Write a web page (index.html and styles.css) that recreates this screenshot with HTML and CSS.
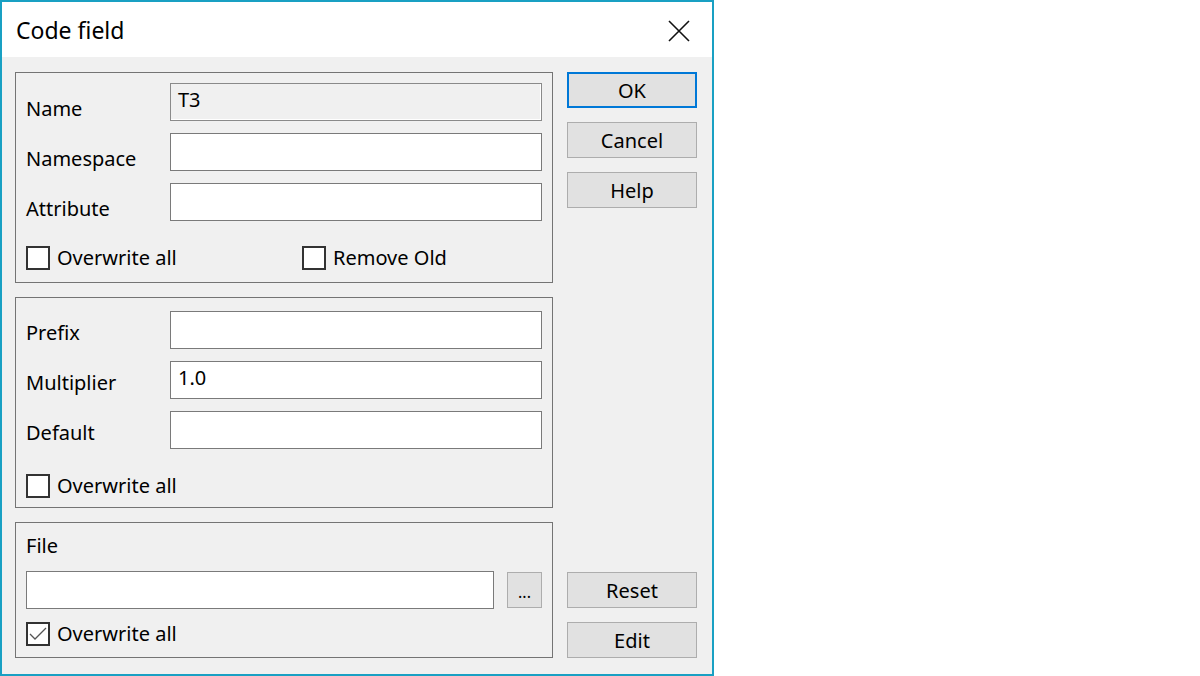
FILE: index.html
```html
<!DOCTYPE html>
<html>
<head>
    <meta charset="UTF-8">
    <title>Code field</title>
    <link rel="stylesheet" href="styles.css">
</head>
<body>
    <div class="window">
        <div class="titlebar">
            <span class="title">Code field</span>
            <span class="close">
                <svg width="22" height="22" viewBox="0 0 22 22">
                    <path d="M1 1 L21 21 M21 1 L1 21" stroke="#111" stroke-width="1.6" fill="none"/>
                </svg>
            </span>
        </div>

        <div class="content">
            <div class="groups">
                <div class="group group-code">
                    <div class="field-row">
                        <span class="label">Name</span>
                        <div class="input readonly">T3</div>
                    </div>
                    <div class="field-row">
                        <span class="label">Namespace</span>
                        <div class="input"></div>
                    </div>
                    <div class="field-row">
                        <span class="label">Attribute</span>
                        <div class="input"></div>
                    </div>
                    <div class="check-row">
                        <label class="check check-wide"><span class="box"></span>Overwrite all</label>
                        <label class="check"><span class="box"></span>Remove Old</label>
                    </div>
                </div>

                <div class="group group-value">
                    <div class="field-row">
                        <span class="label">Prefix</span>
                        <div class="input"></div>
                    </div>
                    <div class="field-row">
                        <span class="label">Multiplier</span>
                        <div class="input">1.0</div>
                    </div>
                    <div class="field-row">
                        <span class="label">Default</span>
                        <div class="input"></div>
                    </div>
                    <div class="check-row">
                        <label class="check"><span class="box"></span>Overwrite all</label>
                    </div>
                </div>

                <div class="group group-file">
                    <span class="label file-label">File</span>
                    <div class="file-row">
                        <div class="input file-input"></div>
                        <button class="btn btn-small">...</button>
                    </div>
                    <div class="check-row">
                        <label class="check"><span class="box checked">
                            <svg width="20" height="20" viewBox="0 0 20 20">
                                <path d="M2 10 L7 15 L18 4" stroke="#555" stroke-width="1.3" fill="none"/>
                            </svg>
                        </span>Overwrite all</label>
                    </div>
                </div>
            </div>

            <div class="side">
                <div class="side-top">
                    <button class="btn btn-default">OK</button>
                    <button class="btn">Cancel</button>
                    <button class="btn">Help</button>
                </div>
                <div class="side-bottom">
                    <button class="btn">Reset</button>
                    <button class="btn">Edit</button>
                </div>
            </div>
        </div>
    </div>
</body>
</html>
```

FILE: styles.css
```css
body {
    margin: 0;
    background: #fff;
    font-family: "Noto Sans", "Open Sans", sans-serif;
    color: #000;
}
.window {
    width: 714px;
    height: 676px;
    box-sizing: border-box;
    border: 2px solid #19a0c3;
    background: #f0f0f0;
    display: flex;
    flex-direction: column;
}
.titlebar {
    height: 55px;
    background: #fff;
    display: flex;
    align-items: center;
    justify-content: space-between;
    padding: 0 22px 0 14px;
}
.title {
    font-size: 23px;
    margin-top: 1px;
}
.close {
    display: flex;
    margin-top: 2px;
}
.content {
    flex: 1;
    display: flex;
    gap: 14px;
    padding: 15px 15px 16px 13px;
}
.groups {
    display: flex;
    flex-direction: column;
    gap: 14px;
}
.group {
    width: 538px;
    box-sizing: border-box;
    border: 1px solid #747474;
    padding: 10px 10px 0 10px;
    display: flex;
    flex-direction: column;
}
.group-code {
    height: 211px;
}
.group-value {
    height: 211px;
    padding-top: 13px;
}
.group-file {
    height: 136px;
    padding-top: 10px;
}
.field-row {
    display: flex;
    height: 38px;
    margin-bottom: 12px;
}
.label {
    width: 144px;
    font-size: 20px;
    padding-top: 13px;
    line-height: 25px;
}
.group-value .label {
    padding-top: 9px;
}
.input {
    width: 372px;
    height: 38px;
    box-sizing: border-box;
    border: 1px solid #7a7a7a;
    background: #fff;
    font-size: 20px;
    line-height: 24px;
    padding: 4px 7px;
}
.input.readonly {
    background: #f0f0f0;
    box-shadow: inset -1px -1px 0 #fff;
    border-color: #8a8a8a;
}
.check-row {
    display: flex;
    margin-top: 13px;
}
.check {
    display: flex;
    align-items: center;
    font-size: 20px;
    line-height: 24px;
    gap: 7px;
}
.check-wide {
    width: 276px;
}
.box {
    width: 24px;
    height: 24px;
    box-sizing: border-box;
    border: 2px solid #333;
    background: #fff;
    display: flex;
    align-items: center;
    justify-content: center;
}
.file-label {
    padding-top: 0;
    height: 25px;
}
.file-row {
    display: flex;
    align-items: center;
    gap: 13px;
    margin-top: 13px;
}
.file-input {
    width: 468px;
    height: 38px;
}
.btn {
    width: 130px;
    height: 36px;
    box-sizing: border-box;
    border: 1px solid #adadad;
    background: #e1e1e1;
    font-family: inherit;
    font-size: 20px;
    color: #000;
    padding: 0;
}
.btn-default {
    border: 2px solid #0078d7;
}
.btn-small {
    width: 35px;
    height: 36px;
    font-size: 16px;
    padding-top: 4px;
}
.side {
    display: flex;
    flex-direction: column;
    justify-content: space-between;
}
.side-top,
.side-bottom {
    display: flex;
    flex-direction: column;
    gap: 14px;
}
```
